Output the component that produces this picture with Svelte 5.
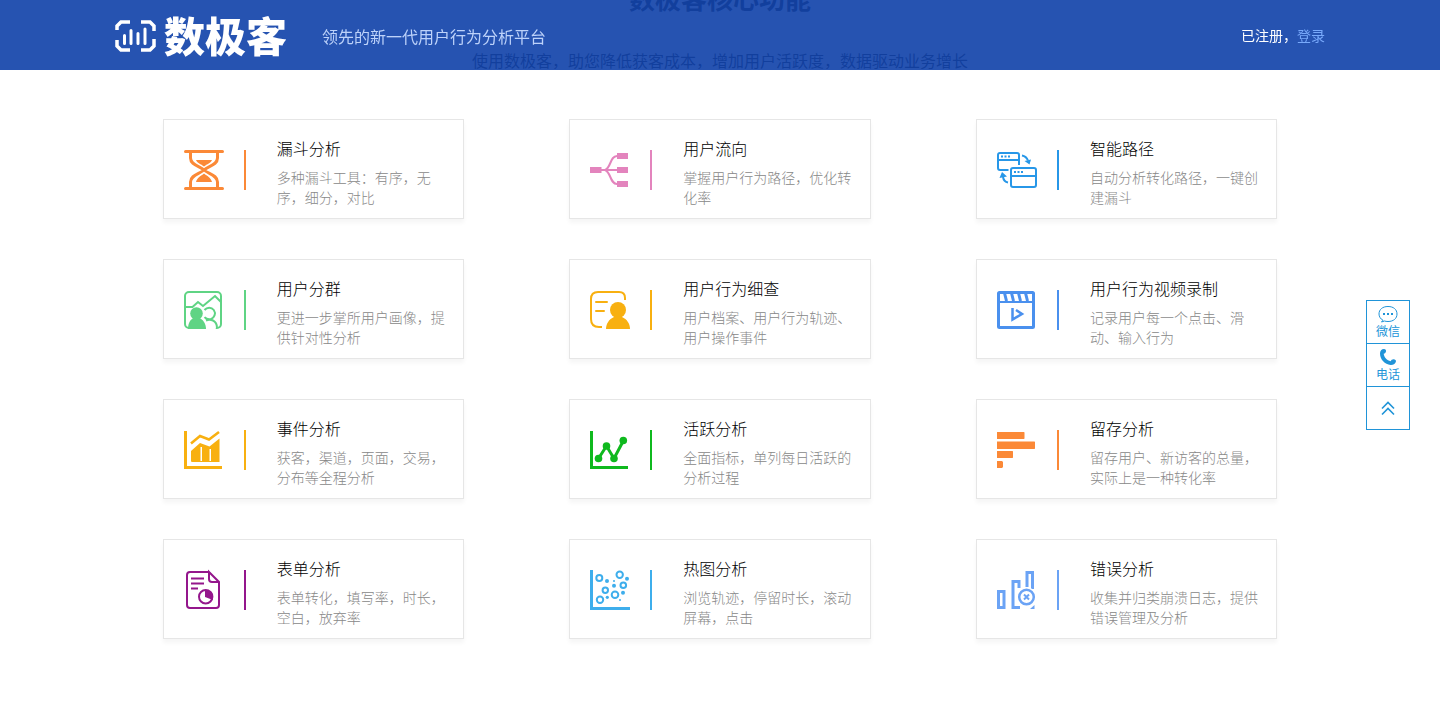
<script>
  const features = [
    { icon: 'funnel', color: '#fb8937', title: '漏斗分析', desc: '多种漏斗工具：有序，无序，细分，对比' },
    { icon: 'flow', color: '#e384bd', title: '用户流向', desc: '掌握用户行为路径，优化转化率' },
    { icon: 'path', color: '#2797e8', title: '智能路径', desc: '自动分析转化路径，一键创建漏斗' },
    { icon: 'group', color: '#5fd484', title: '用户分群', desc: '更进一步掌所用户画像，提供针对性分析' },
    { icon: 'detail', color: '#f8b010', title: '用户行为细查', desc: '用户档案、用户行为轨迹、用户操作事件' },
    { icon: 'video', color: '#4a90ee', title: '用户行为视频录制', desc: '记录用户每一个点击、滑动、输入行为' },
    { icon: 'event', color: '#f8b010', title: '事件分析', desc: '获客，渠道，页面，交易，分布等全程分析' },
    { icon: 'active', color: '#0fb91e', title: '活跃分析', desc: '全面指标，单列每日活跃的分析过程' },
    { icon: 'retain', color: '#fb8937', title: '留存分析', desc: '留存用户、新访客的总量，实际上是一种转化率' },
    { icon: 'form', color: '#94168c', title: '表单分析', desc: '表单转化，填写率，时长，空白，放弃率' },
    { icon: 'heat', color: '#3eaeec', title: '热图分析', desc: '浏览轨迹，停留时长，滚动屏幕，点击' },
    { icon: 'error', color: '#6ba3f5', title: '错误分析', desc: '收集并归类崩溃日志，提供错误管理及分析' }
  ];
  const rings = [[9.3, 8, 3], [29.7, 4.7, 3.2], [33.3, 15.3, 2.8], [15.3, 20.3, 2.7], [25, 24.7, 3.3], [10, 29.7, 3.2]];
  const dots = [[17, 11, 2], [24, 11, 1], [24, 15.7, 2], [37, 8.7, 2], [33, 22.7, 2], [17.3, 27.3, 1.6], [30, 30, 1]];
</script>

{#snippet glyph(name)}
  <svg class="icon" viewBox="0 0 40 40" aria-hidden="true">
    {#if name === 'funnel'}
      <path class="line w3 round" d="M1.5 1.5h37M1.5 38.500h37" />
      <path class="line w3" d="M6.500 2v6c0 7 9 8 13.500 12C15.500 24 6.500 25 6.500 32v6M33.500 2v6c0 7-9 8-13.500 12 4.500 4 13.500 5 13.500 12v6" />
      <path class="solid" d="M12 10h16c-1 3-5 4-8 6.500-3-2.500-7-3.500-8-6.500zM20 23.500c3 2.500 7 4 8 8.500H12c1-4.500 5-6 8-8.500z" />
    {:else if name === 'flow'}
      <path class="line w2" d="M11 20h16M15 20C21 18 20 6 27 6M15 20c6 2 5 14 12 14" />
      <path class="solid" d="M0 17h11.500v6H0zM27 3h11v6H27zM27 17h11v6H27zM27 31h11v6H27z" />
    {:else if name === 'path'}
      <path class="line w2" d="M11.500 20H3c-1.300 0-2-.7-2-2V5c0-1.300.7-2 2-2h17c1.300 0 2 .7 2 2v10M1 10h21" />
      <rect class="line w2" x="14" y="18" width="25" height="19" rx="2" />
      <path class="line w2" d="M14 26h25" />
      <path class="solid" d="M4 5.500h2v2H4zM7.500 5.500h2v2h-2zM11 5.500h2v2h-2zM17 21h2v2h-2zM20.500 21h2v2h-2zM24 21h2v2h-2z" />
      <path class="line w2" d="M25 5.500c3 .5 5 2.500 6 5M11 32.500c-3-.5-4.500-2.500-5-5.500" />
      <path class="solid" d="M27.500 11l6.500-1.500-1.500 5zM2.500 28L5 22l5 4.500z" />
    {:else if name === 'group'}
      <rect class="line w2" x="1" y="2" width="36" height="36" rx="4" />
      <path class="line w2" d="M0 17h8.500l5.500-5 5 4L31 6l6 6" />
      <path class="bg" d="M21 30c3-3 11-2 11 8l-1 2H20z" />
      <path class="line w2" d="M20.500 20c2.500-3 7-3 9.300 0 2.500 3.500.5 8-3 9.200-2.500.5-5-.5-6.300-2M22 30.500c4-2 11-.5 11 7.500" />
      <circle class="solid" cx="12.500" cy="23.500" r="6.300" />
      <path class="solid" d="M4 39c0-5 2-10 6-11h5c4 1 7 6 7 11z" />
    {:else if name === 'detail'}
      <path class="line w2" d="M12 37H9c-5 0-8-3-8-8V9c0-5 2-7 7-7h21c4 0 6 2 6 6v2" />
      <path class="line w2 round" d="M6 12h11M6 21h8" />
      <circle class="solid" cx="28" cy="20" r="8" />
      <path class="solid" d="M16 39c0-5 3-10 8-12h8c5 2 8 7 8 12z" />
    {:else if name === 'video'}
      <rect class="line w3" x="1.500" y="2.500" width="35" height="35" rx="1" />
      <path class="line w2" d="M1 12h36" />
      <path class="line w3" d="M7.500 3l2 8M14.500 3l2 8M21.500 3l2 8M28.500 3l2 8" />
      <path class="line strong" d="M15.500 18v11.500L25 24l-6-4" />
    {:else if name === 'event'}
      <path class="line w3" d="M1.500 1v36.500H38" />
      <path class="line strong" d="M7 13.500L16 6l9 3.500L35 2" />
      <path class="solid" d="M7 21l9-8 9.500 3.500L35.500 8.500V32H8c-1 0-1-1-1-1z" />
      <path class="bg" d="M16.500 17H18v14h-1.500zM25.500 19H27v12h-1.500z" />
    {:else if name === 'active'}
      <path class="line w3" d="M1.500 1v36.500H38" />
      <path class="line w3" d="M8.500 28.500l8-12.500L24 28.500l9.500-18" />
      <circle class="solid" cx="8.500" cy="28.500" r="3.800" /><circle class="solid" cx="16.500" cy="16" r="3.800" />
      <circle class="solid" cx="24" cy="28.500" r="3.800" /><circle class="solid" cx="33.300" cy="10.500" r="3.800" />
    {:else if name === 'retain'}
      <path class="solid" d="M0 2h27l.5.500v6l-.5.500H0zM0 11.500h37.500l.5.500v6.500l-.5.500H0zM0 21h15.500l.5.500v6l-.5.500H0zM0 31h5l1 1v5l-1 1H0z" />
    {:else if name === 'form'}
      <path class="line w2" d="M25 2H6C4 2 3 3 3 5v30c0 2 1 3 3 3h26c2 0 3-1 3-3V12L25 2v7c0 2 1 3 3 3h7" />
      <path class="line w2" d="M7 8.500h13M7 13.500h13M7 18.500h7" />
      <circle class="line w2" cx="21.700" cy="26.700" r="6.700" />
      <path class="solid" d="M21 20l7 2 1 8-8-3z" />
    {:else if name === 'heat'}
      <path class="line w3" d="M1.500 0v38.500H40" />
      {#each rings as [x, y, r]}<circle class="line w2" cx={x} cy={y} {r} />{/each}
      {#each dots as [x, y, r]}<circle class="solid" cx={x} cy={y} {r} />{/each}
    {:else}
      <path class="line w3" d="M1.500 21.500h5.500v16H1.500zM22 18v-6.500h-6v26h7M30 17V2.500h5.500V19" />
      <circle class="bg" cx="29.500" cy="27" r="10" />
      <path class="solid" d="M33 39l4.500-4v4z" />
      <circle class="line strong" cx="29.500" cy="27" r="7.300" />
      <path class="line w2" d="M27 24.500l5 5M32 24.500l-5 5" />
    {/if}
  </svg>
{/snippet}

<header class="topbar">
  <div class="bar">
    <a class="logo" href="#top">
      <svg class="mark" viewBox="0 0 41 32" aria-hidden="true">
        <path d="M2 10V6l4-4h9M26 2h9l4 4v5M2 20v6l4 4h9M26 30h9l4-4v-7" stroke-width="3.500" />
        <path d="M9.500 15.500v8M16 10.500v13M23 13.500v10M30 9v14.500" stroke-width="3" stroke-linecap="round" />
      </svg>
      <span>数极客</span>
    </a>
    <p class="tagline">领先的新一代用户行为分析平台</p>
    <p class="account">已注册，<a href="#login">登录</a></p>
  </div>
</header>

<main id="top">
  <h2>数极客核心功能</h2>
  <p class="lead">使用数极客，助您降低获客成本，增加用户活跃度，数据驱动业务增长</p>
  <ul class="grid">
    {#each features as f}
      <li class="cell">
        <article class="card" style="--tone: {f.color}">
          {@render glyph(f.icon)}
          <div class="rule"></div>
          <div class="text">
            <h3>{f.title}</h3>
            <p>{f.desc}</p>
          </div>
        </article>
      </li>
    {/each}
  </ul>
</main>

<nav class="dock" aria-label="联系">
  <button type="button">
    <svg width="20" height="18" viewBox="0 0 20 18" aria-hidden="true">
      <path d="M5 15.300C2.500 14 1 11.500 1 9c0-4.500 3.500-7.500 9-7.500S19 4.500 19 9s-3.500 7.500-9 7.500c-1.500 0-2.500-.2-3.500-.5L3.500 17z" fill="none" stroke="currentColor" />
      <path d="M5 8h2v2H5zM9 8h2v2H9zM13 8h2v2h-2z" fill="currentColor" />
    </svg>
    <span>微信</span>
  </button>
  <button type="button">
    <svg width="20" height="18" viewBox="0 0 20 18" aria-hidden="true">
      <path d="M2 5.500C2 3 3.500 1 6 1c1.500 0 2.300 1 2 2.500-.3 1.200-1 2-2.300 2.200.3 3.300 3.300 6.800 7 7.500C13 12 14.500 11 16 11.200c1.600.3 2.400 1.500 1.800 2.800-.8 2-2.800 3.200-5.300 3C7 16.500 2 11.500 2 5.500z" fill="currentColor" />
    </svg>
    <span>电话</span>
  </button>
  <button type="button" aria-label="返回顶部">
    <svg width="20" height="18" viewBox="0 0 20 18" aria-hidden="true">
      <path d="M4 9.500l6-6 6 6M4 15.500l6-6 6 6" fill="none" stroke="currentColor" stroke-width="1.600" />
    </svg>
  </button>
</nav>

<style>
  :global(body) {
    margin: 0;
    background: #fff;
    font-family: "Noto Sans CJK SC", "Noto Sans", sans-serif;
    font-weight: 300;
    color: #333;
  }
  :global(#app) { display: flow-root; }
  h2, h3, p, ul { margin: 0; padding: 0; }
  a { text-decoration: none; }

  .topbar {
    position: fixed;
    inset: 0 0 auto;
    z-index: 2;
    background: rgba(14, 64, 168, 0.9);
  }
  .bar {
    box-sizing: border-box;
    max-width: 1220px;
    height: 70px;
    margin: 0 auto;
    padding: 0 5px;
    display: flex;
    align-items: center;
  }
  .logo {
    display: flex;
    align-items: center;
    gap: 8px;
    color: #fff;
    font-size: 41px;
    line-height: 68px;
    font-weight: 900;
  }
  .logo span { padding-bottom: 2px; }
  .mark { width: 41px; height: 32px; margin-top: 2px; fill: none; stroke: #fff; }
  .tagline { margin: 2px 0 0 35px; font-size: 16px; line-height: 24px; color: #bdd2fa; font-weight: 400; }
  .account { margin-left: auto; font-size: 14px; line-height: 20px; color: #fff; font-weight: 400; }
  .account a { color: #78a9fb; }

  main { margin: -15px auto 0; max-width: 1220px; }
  h2 { font-size: 26px; line-height: 26px; font-weight: 700; text-align: center; }
  .lead { margin-top: 37px; font-size: 16px; line-height: 24px; text-align: center; color: #333; font-weight: 400; }
  .grid {
    list-style: none;
    margin-top: 47px;
    display: grid;
    grid-template-columns: repeat(3, 1fr);
    gap: 40px 0;
    padding-bottom: 76px;
  }
  .cell { padding: 0 12.95%; }
  .card {
    box-sizing: border-box;
    min-height: 100px;
    padding: 2px 10px 0 20px;
    border: 1px solid #e6e6e6;
    background: #fff;
    box-shadow: 0 4px 4px rgba(0, 0, 0, 0.04);
    display: flex;
    align-items: center;
    color: var(--tone);
  }
  .icon { flex: none; width: 40px; height: 40px; overflow: visible; }
  .line { fill: none; stroke: currentColor; }
  .solid { fill: currentColor; }
  .bg { fill: #fff; }
  .w2 { stroke-width: 2; }
  .w3 { stroke-width: 3; }
  .strong { stroke-width: 2.5; }
  .round { stroke-linecap: round; }
  .rule { flex: none; width: 2px; height: 40px; margin: 0 31px 0 20px; background: var(--tone); }
  .text { padding-top: 3px; }
  h3 { font-size: 16px; line-height: 24px; font-weight: 300; color: #000; }
  .text p { margin-top: 7px; font-size: 14px; line-height: 20px; color: #888; }

  .dock {
    position: fixed;
    top: 300px;
    right: 30px;
    z-index: 3;
    width: 44px;
    box-sizing: border-box;
    border: 1px solid #2094d8;
    background: #2094d8;
    display: grid;
    gap: 1px;
  }
  button {
    height: 42px;
    padding: 0;
    border: 0;
    background: #fff;
    color: #2094d8;
    font: 400 12px/16px "Noto Sans CJK SC", sans-serif;
    display: flex;
    flex-direction: column;
    align-items: center;
    justify-content: center;
    cursor: pointer;
  }
</style>
